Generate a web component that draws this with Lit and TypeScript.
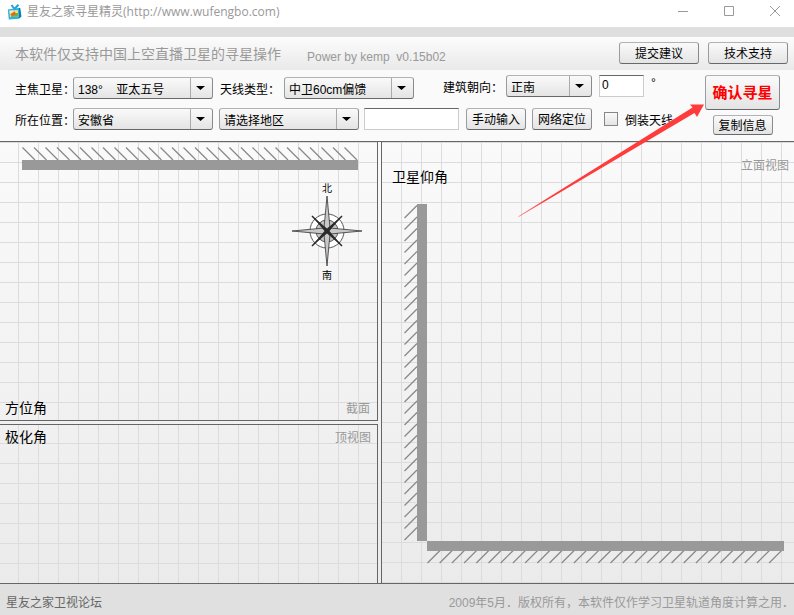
import { LitElement, css, html, svg } from "lit";
import { customElement } from "lit/decorators.js";

const HATCHES = Array.from({ length: 29 }, (_, i) => i);

const topWall = svg`
  ${HATCHES.map((i) => svg`<line x1=${i * 11.5 + 0.5} y1="0.5" x2=${i * 11.5 + 13} y2="13"></line>`)}
  <rect x="0" y="13" width="336" height="10"></rect>`;

const sideWall = svg`
  ${HATCHES.map((i) => svg`<line x1="0.5" y1=${i * 11.5 + 14} x2="13" y2=${i * 11.5 + 1.5}></line>`)}
  <rect x="13" y="0" width="10" height="337"></rect>`;

const floorWall = svg`
  ${HATCHES.map((i) => svg`<line x1=${i * 12.2 + 0.5} y1="22" x2=${i * 12.2 + 13} y2="9.5"></line>`)}
  <rect x="0" y="0" width="357" height="10"></rect>`;

@customElement("app-root")
export class AppRoot extends LitElement {
  static styles = css`
    :host {
      display: flex;
      flex-direction: column;
      min-height: 100vh;
      box-sizing: border-box;
      overflow: hidden;
      background: #fafafa;
      color: #000;
      font: 12px/16px "Liberation Sans", "Noto Sans CJK SC", sans-serif;
    }
    * { box-sizing: border-box; }
    h1, h2, p { margin: 0; font-weight: 400; }

    .titlebar {
      display: flex;
      align-items: center;
      height: 27px;
      flex: none;
      padding: 0 11px 4px 7px;
      background: #fff;
    }
    .logo { width: 15px; height: 16px; margin-right: 5px; }
    .title {
      flex: 1;
      color: #999;
      font: 12px/16px "Open Sans", "Noto Sans CJK SC", sans-serif;
      white-space: nowrap;
    }
    .controls { display: flex; gap: 30px; }
    .control {
      width: 16px;
      height: 16px;
      padding: 0;
      border: 0;
      background: none;
    }
    .control svg { display: block; }
    .control path { fill: none; stroke: #999; }

    .banner {
      display: flex;
      align-items: center;
      flex: none;
      height: 43px;
      padding: 0 6px 0 15px;
      border-top: 10px solid #dfdfdf;
      background: linear-gradient(#fcfcfc, #e9e9e9);
      color: #999;
      white-space: nowrap;
    }
    .slogan { font-size: 14px; line-height: 20px; }
    .credit { margin: 6px auto 0 26px; white-space: pre; }
    .links { display: flex; gap: 9px; padding-bottom: 1px; }

    button.push {
      height: 22px;
      padding: 2px 0 0;
      border: 1px solid;
      border-color: #b0b3b5 #888b8d #66696b #9a9d9f;
      border-radius: 3px;
      background: linear-gradient(#fafafa, #e4e4e4);
      color: #000;
      font: inherit;
      line-height: 18px;
      white-space: nowrap;
    }
    button.wide { width: 80px; }
    button.normal { width: 60px; }
    button.low { height: 20px; line-height: 16px; }
    button.confirm {
      width: 75px;
      height: 35px;
      padding: 0;
      color: #f00;
      font-size: 15px;
      font-weight: 700;
    }

    .toolbar {
      display: flex;
      justify-content: space-between;
      flex: none;
      padding: 5px 14px 6px 15px;
      border-bottom: 1px solid #666;
      background: #fafafa;
    }
    .form { display: flex; flex-direction: column; gap: 9px; }
    .row { display: flex; align-items: flex-end; height: 24px; }
    .row.second { height: 22px; }
    .field { display: flex; align-items: center; white-space: nowrap; }
    .field.type { margin-left: 7px; }
    .field.facing { align-self: flex-start; margin-left: 29px; }
    .field label { width: 64px; padding-top: 3px; }
    .field.first label { width: 58px; }
    .field.facing label { width: 63px; }
    .degree { align-self: flex-start; margin-left: 7px; }

    .select {
      position: relative;
      display: inline-flex;
    }
    .select select {
      appearance: none;
      width: 100%;
      height: 22px;
      padding: 3px 24px 0 4px;
      border: 1px solid;
      border-color: #b0b3b5 #888b8d #66696b #9a9d9f;
      border-radius: 3px;
      color: #000;
      font: inherit;
      background: linear-gradient(#fafafa, #e4e4e4);
    }
    .select::before {
      content: "";
      position: absolute;
      right: 22px;
      top: 1px;
      bottom: 1px;
      width: 1px;
      background: #aaa;
    }
    .select::after {
      content: "";
      position: absolute;
      right: 8px;
      top: 9px;
      width: 9px;
      height: 4px;
      background: #000;
      clip-path: polygon(0 0, 100% 0, 50% 100%);
    }
    .w140 { width: 140px; }
    .w130 { width: 130px; }
    .w86 { width: 86px; }

    .text {
      width: 95px;
      height: 22px;
      padding: 0 2px 2px;
      border: 1px solid #ccc;
      border-top-color: #666;
      border-radius: 0;
      background: #fff;
      color: #000;
      font: inherit;
    }
    .text.angle { width: 45px; margin-left: 7px; }
    .second { gap: 6px; }
    .second .text { margin: 0 1px 0 -1px; }
    .field.flip { align-self: center; gap: 7px; margin-left: 6px; }
    .flip input {
      appearance: none;
      width: 14px;
      height: 14px;
      margin: 0;
      border: 1px solid #85888a;
      background: linear-gradient(#fafafa, #e4e4e4);
    }

    .actions {
      position: relative;
      display: flex;
      flex-direction: column;
      align-items: center;
      gap: 5px;
      flex: none;
    }
    .arrow {
      position: absolute;
      z-index: 2;
      right: 75px;
      top: 28px;
      width: 190px;
      height: 116px;
      pointer-events: none;
    }

    .views {
      flex: 1;
      display: grid;
      grid-template-columns: 378fr 416fr;
      background: linear-gradient(#fafafa, #ebebeb);
    }
    .left {
      display: grid;
      grid-template-rows: 279fr 159fr;
      gap: 3px;
    }
    .panel {
      display: flex;
      flex-direction: column;
      min-width: 0;
      background-image:
        linear-gradient(90deg, #dcdcdc 1px, transparent 1px),
        linear-gradient(#dcdcdc 1px, transparent 1px);
      background-size: 20px 20px;
    }
    .azimuth {
      border: solid #666;
      border-width: 0 1px 1px 0;
      background-position: 18px 20px;
    }
    .polar {
      border: solid #666;
      border-width: 1px 1px 0 0;
      background-position: 18px 18px;
    }
    .elevation {
      margin-left: 3px;
      border-left: 1px solid #666;
      background-position: 19px 20px;
    }
    .name { font-size: 14px; line-height: 20px; }
    .view { color: #999; padding-top: 2px; }
    .caption {
      display: flex;
      justify-content: space-between;
      align-items: center;
      padding: 2px 6px 2px 5px;
    }
    .azimuth .caption { margin-top: auto; padding-right: 7px; }
    .head {
      display: flex;
      justify-content: space-between;
      height: 62px;
      padding: 14px 5px 0 10px;
    }
    .head .name { margin-top: 11px; }

    .wall { display: block; overflow: visible; }
    .wall line { stroke: #888; stroke-width: 1.2; vector-effect: non-scaling-stroke; }
    .wall rect { fill: #999; }
    .wall.top { width: calc(100% - 41px); height: 23px; margin: 5px 0 0 22px; }
    .compass { align-self: flex-end; width: 72px; height: 100px; margin: 11px 14px 0 0; }
    .compass text { font-size: 10px; text-anchor: middle; }
    .room {
      flex: 1;
      display: grid;
      grid-template-columns: 23px 1fr;
      grid-template-rows: 1fr 22px;
      margin: 0 10px 20px 22px;
      min-height: 200px;
    }
    .side-cell { position: relative; }
    .wall.side { position: absolute; inset: 0; width: 23px; height: 100%; }
    .wall.floor { grid-area: 2 / 2; width: 100%; height: 22px; }

    .footer {
      display: flex;
      justify-content: space-between;
      align-items: center;
      flex: none;
      height: 32px;
      padding: 6px 0 0 6px;
      border-top: 1px solid #666;
      background: #e0e0e0;
      color: #999;
      white-space: nowrap;
      overflow: hidden;
    }
    .footer a { color: #666; text-decoration: none; }
  `;

  render() {
    return html`
      <header class="titlebar">
        <svg class="logo" viewBox="0 0 15 16" aria-hidden="true">
          <path d="M4.500 1 7.500 5 11.500 .8" fill="none" stroke="#2a9fd0" stroke-width="2"></path>
          <path d="M.8 5.500 13 3.800l1.400 8.600-2.600 2.400-10 .6z" fill="#22b2e8"></path>
          <path d="M12 4l1.200-.1 1.100 8.500-2.400 2.200z" fill="#087cae"></path>
          <path d="M2.300 6.800 10.800 6l.6 6.600-8.300.6z" fill="#f3e27a"></path>
          <path d="M2.300 6.800 7 6.300 3 9z" fill="#d8f2fa"></path>
          <path d="M4 13.100c0-3 3-4 7-4l.4 3.500z" fill="#6fae48"></path>
          <path d="M3 10.500 7.500 7.500l1.500 2-3.500 2.600z" fill="#e8622a"></path>
        </svg>
        <h1 class="title">星友之家寻星精灵(http://www.wufengbo.com)</h1>
        <div class="controls">
          <button class="control" aria-label="最小化">
            <svg width="16" height="16"><path d="M3 7.500h10"></path></svg>
          </button>
          <button class="control" aria-label="最大化">
            <svg width="16" height="16"><path d="M3.500 2.500h9v9h-9z"></path></svg>
          </button>
          <button class="control" aria-label="关闭">
            <svg width="16" height="16"><path d="M3 2l10 10M13 2 3 12"></path></svg>
          </button>
        </div>
      </header>

      <div class="banner">
        <p class="slogan">本软件仅支持中国上空直播卫星的寻星操作</p>
        <p class="credit">Power by kemp  v0.15b02</p>
        <div class="links">
          <button class="push wide">提交建议</button>
          <button class="push wide">技术支持</button>
        </div>
      </div>

      <div class="toolbar">
        <div class="form">
          <div class="row">
            <div class="field first">
              <label for="satellite">主焦卫星：</label>
              <span class="select w140"><select id="satellite"><option>138°\u00a0\u00a0\u00a0\u00a0亚太五号</option></select></span>
            </div>
            <div class="field type">
              <label for="dish">天线类型：</label>
              <span class="select w130"><select id="dish"><option>中卫60cm偏馈</option></select></span>
            </div>
            <div class="field facing">
              <label for="facing">建筑朝向：</label>
              <span class="select w86"><select id="facing"><option>正南</option></select></span>
              <input class="text angle" aria-label="角度" value="0" />
              <span class="degree">°</span>
            </div>
          </div>
          <div class="row second">
            <div class="field first">
              <label for="province">所在位置：</label>
              <span class="select w140"><select id="province"><option>安徽省</option></select></span>
            </div>
            <span class="select w140"><select aria-label="地区"><option>请选择地区</option></select></span>
            <input class="text" aria-label="位置" />
            <button class="push normal">手动输入</button>
            <button class="push normal">网络定位</button>
            <div class="field flip"><input type="checkbox" id="flip" /><label for="flip">倒装天线</label></div>
          </div>
        </div>
        <div class="actions">
          <button class="push confirm">确认寻星</button>
          <button class="push normal low">复制信息</button>
          <svg class="arrow" viewBox="0 0 190 116" aria-hidden="true">
            <defs>
              <linearGradient id="fade" x1="0" y1="1" x2="1" y2="0">
                <stop offset="0" stop-color="#ff3b3b" stop-opacity="0.6"></stop>
                <stop offset="0.15" stop-color="#ff3b3b"></stop>
              </linearGradient>
            </defs>
            <path d="M3 113.500 177.500 4.500 175 1.500h14l-7 12.500-2.500-4L4 113.800z" fill="url(#fade)"></path>
          </svg>
        </div>
      </div>

      <main class="views">
        <div class="left">
          <section class="panel azimuth">
            <svg class="wall top" viewBox="0 0 336 23" preserveAspectRatio="none" aria-hidden="true">${topWall}</svg>
            <svg class="compass" viewBox="-36 -50 72 100">
              <circle r="17" fill="#fff" stroke="#555"></circle>
              <circle r="11" fill="#c4c4c4" stroke="#555"></circle>
              <circle r="7" fill="#e8e8e8"></circle>
              <path d="M0-35 3-3 35 0 3 3 0 35-3 3-35 0-3-3z" fill="#c8c8c8" stroke="#333" stroke-width=".8"></path>
              <path d="M-15.500-15.500 0-2.500 15.500-15.500 2.500 0 15.500 15.500 0 2.500-15.500 15.500-2.500 0z" fill="#2b2b2b"></path>
              <path d="M-15-15 15 15M15-15-15 15" stroke="#2b2b2b" stroke-width="1.500"></path>
              <text y="-39">北</text>
              <text y="48">南</text>
            </svg>
            <div class="caption"><h2 class="name">方位角</h2><span class="view">截面</span></div>
          </section>
          <section class="panel polar">
            <div class="caption"><h2 class="name">极化角</h2><span class="view">顶视图</span></div>
          </section>
        </div>
        <section class="panel elevation">
          <div class="head"><h2 class="name">卫星仰角</h2><span class="view">立面视图</span></div>
          <div class="room">
            <div class="side-cell">
              <svg class="wall side" viewBox="0 0 23 337" preserveAspectRatio="none" aria-hidden="true">${sideWall}</svg>
            </div>
            <svg class="wall floor" viewBox="0 0 357 22" preserveAspectRatio="none" aria-hidden="true">${floorWall}</svg>
          </div>
        </section>
      </main>

      <footer class="footer">
        <a href="#">星友之家卫视论坛</a>
        <span>2009年5月．版权所有，本软件仅作学习卫星轨道角度计算之用．</span>
      </footer>
    `;
  }
}
